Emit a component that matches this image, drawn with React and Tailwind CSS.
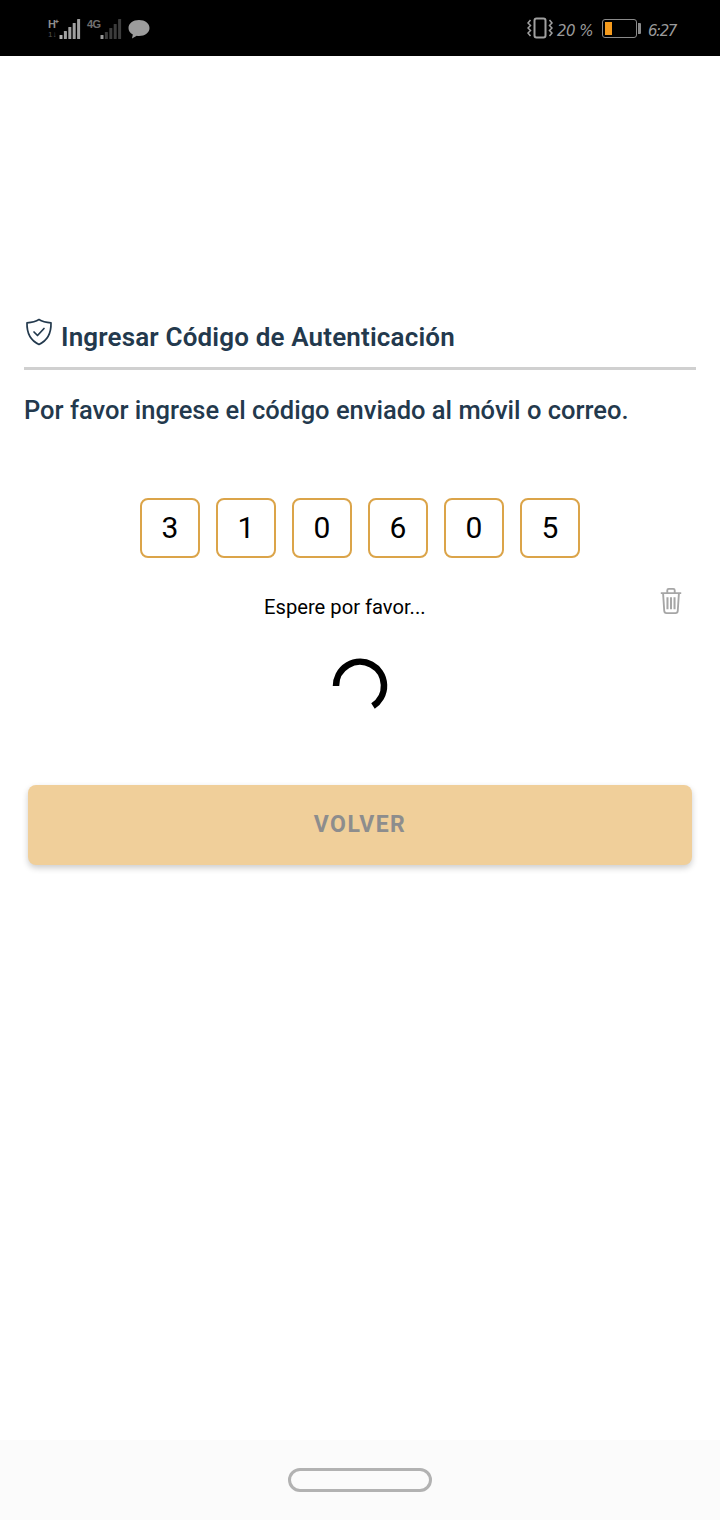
import React from "react";

const digits = ["3", "1", "0", "6", "0", "5"];

function Signal({ bars, color, dim }) {
  return (
    <svg width="22" height="20" viewBox="0 0 22 20" className="block">
      {bars.map((h, i) => (
        <rect
          key={i}
          x={i * 4.4 + 0.5}
          y={20 - h}
          width="3"
          height={h}
          rx="0.5"
          fill={i === 0 ? color : dim}
        />
      ))}
    </svg>
  );
}

function StatusBar() {
  return (
    <div className="h-14 bg-black flex items-center justify-between pl-[48px] pr-[44px] font-['Liberation_Sans',sans-serif]">
      <div className="flex items-center pt-[1px]">
        <div className="w-[11px] h-[20px] flex flex-col items-start justify-between">
          <span className="text-[11px] leading-[11px] font-bold text-[#8e8e8e] tracking-[-1px]">H⁺</span>
          <span className="text-[8px] leading-[8px] text-[#555555]">1↓</span>
        </div>
        <Signal bars={[4, 8, 12, 16, 20]} color="#b0b0b0" dim="#a0a0a0" />
        <span className="ml-[6px] w-[13px] self-start text-[11px] leading-[11px] font-bold text-[#707070] tracking-[-0.5px]">4G</span>
        <Signal bars={[4, 7, 11, 15, 20]} color="#9a9a9a" dim="#3c3c3c" />
        <svg width="24" height="20" viewBox="0 0 24 20" className="ml-[5px] block">
          <path d="M12 1c6 0 10.500 3.300 10.500 8S18 17 12 17c-.8 0-1.500-.1-2.200-.2L5 19.500l.8-4.100C3 14 1.500 11.800 1.500 9 1.500 4.300 6 1 12 1z" fill="#9c9c9c" />
        </svg>
      </div>
      <div className="flex items-center">
        <svg width="26" height="22" viewBox="0 0 26 22" className="block" fill="none" stroke="#a0a0a0">
          <rect x="7.500" y="1.500" width="11" height="19" rx="2" strokeWidth="2" />
          <path d="M3.500 3 1 6l2.500 2.500L1 11l2.500 2.500L1 16l2.500 3M22.500 3 25 6l-2.500 2.500L25 11l-2.500 2.500L25 16l-2.500 3" strokeWidth="1.500" />
        </svg>
        <span className="ml-[4px] mt-[7px] w-[44px] text-[15px] italic text-[#9a9a9a] font-['DejaVu_Sans',sans-serif] leading-none whitespace-nowrap tracking-[-0.5px]">20 %</span>
        <div className="ml-[1px] flex items-center">
          <div className="w-[35px] h-[19px] border border-[#8a8a8a] rounded-[3px] p-[2px]">
            <div className="w-[7px] h-full bg-[#f59a1c]" />
          </div>
          <div className="ml-[1px] w-[3px] h-[11px] bg-[#8a8a8a] rounded-r-[1px]" />
        </div>
        <span className="ml-[7px] mt-[7px] text-[15px] italic text-[#9a9a9a] font-['DejaVu_Sans',sans-serif] leading-none tracking-[-1.400px]">6:27</span>
      </div>
    </div>
  );
}

export default function App() {
  return (
    <div className="w-[720px] h-[1520px] bg-white flex flex-col font-['Roboto',sans-serif] overflow-hidden">
      <StatusBar />

      <main className="flex-1 pt-[262px]">
        <div className="px-6">
          <div className="flex items-start h-[49px] border-b-[3px] border-[#d0d0d0] box-content pb-0">
            <svg width="30" height="28" viewBox="0 0 30 28" fill="none" stroke="#23394d" strokeWidth="1.700" className="block shrink-0">
              <path d="M15 1.500c3 2 7 3 12 3.300.3 10-3 17.500-12 21.700C6 22.300 2.700 14.800 3 4.800c5-.3 9-1.300 12-3.300z" strokeLinejoin="round" />
              <path d="m10 14 3.500 3.500L20 10.500" strokeLinecap="round" strokeLinejoin="round" />
            </svg>
            <h1 className="ml-[7px] mt-[5px] text-[26px] leading-[28px] font-semibold text-[#23394d] whitespace-nowrap tracking-[0.16px]">
              Ingresar Código de Autenticación
            </h1>
          </div>
          <p className="mt-[25px] text-[25.500px] leading-[30px] font-medium text-[#23394d] whitespace-nowrap">
            Por favor ingrese el código enviado al móvil o correo.
          </p>
        </div>

        <div className="mt-[73px] flex justify-center gap-4">
          {digits.map((d, i) => (
            <div
              key={i}
              className="w-[60px] h-[60px] border-2 border-[#dba449] rounded-[8px] flex items-center justify-center pb-[2px] text-[30px] text-black"
            >
              {d}
            </div>
          ))}
        </div>

        <div className="mt-[30px] h-[28px] flex items-start justify-between pl-[264px] pr-[37px]">
          <span className="mt-[7px] text-[20.200px] leading-[24px] text-black whitespace-nowrap">Espere por favor...</span>
          <svg width="24" height="26" viewBox="0 0 24 28" fill="none" stroke="#a6a6a6" strokeWidth="2" className="block">
            <path d="M1 5.500h22M8 5V2.500C8 1.700 8.700 1 9.500 1h5c.8 0 1.500.7 1.500 1.500V5" />
            <path d="M3.500 6l1.200 18.500c.1 1.400 1 2.500 2.400 2.500h9.800c1.400 0 2.300-1.100 2.400-2.500L20.500 6" />
            <path d="M8.200 10v13M12 10v13M15.800 10v13" strokeWidth="2.200" />
          </svg>
        </div>

        <div className="mt-[39px] flex justify-center">
          <svg width="60" height="60" viewBox="0 0 60 60" fill="none" className="block">
            <path d="M6 31A24 24 0 1 1 43 51" stroke="#000" strokeWidth="6.500" />
          </svg>
        </div>

        <div className="mt-[70px] px-7">
          <button className="w-full h-[80px] rounded-[8px] bg-[#f0cf9a] text-[#8d8d8d] text-[23px] font-bold tracking-[1.500px] shadow-[0_3px_6px_rgba(0,0,0,0.2)]">
            VOLVER
          </button>
        </div>
      </main>

      <div className="h-20 bg-[#fbfbfb] flex items-start justify-center pt-7">
        <div className="w-[144px] h-6 rounded-full border-[3px] border-[#b2b2b2]" />
      </div>
    </div>
  );
}
